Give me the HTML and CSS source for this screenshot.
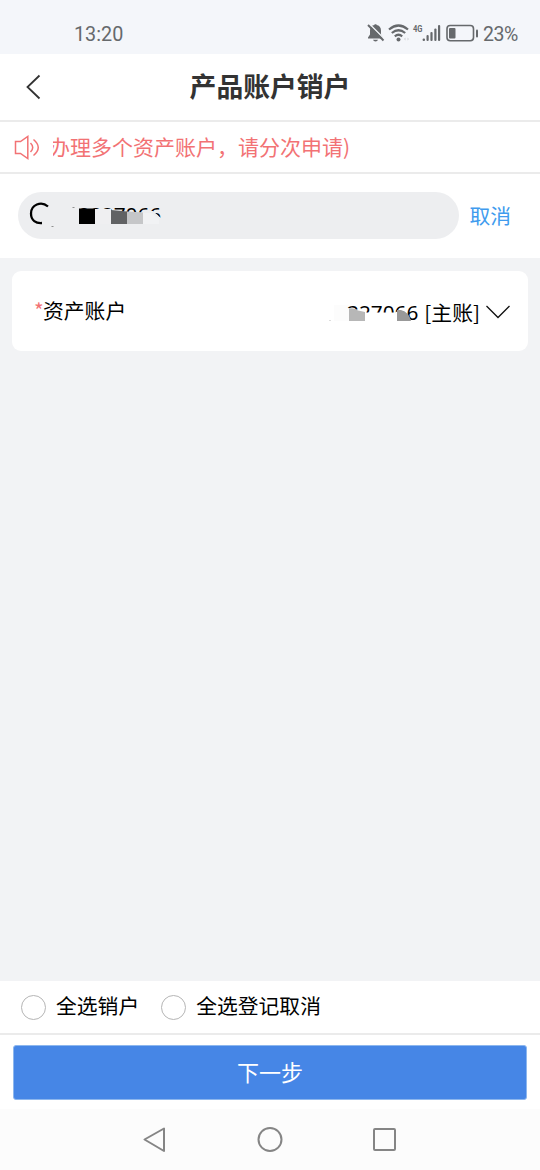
FILE: index.html
```html
<!DOCTYPE html>
<html lang="zh-CN">
<head>
<meta charset="utf-8">
<title>产品账户销户</title>
<link rel="stylesheet" href="styles.css">
</head>
<body>
<div class="screen">
  <div class="status">
    <span class="clock">13:20</span>
    <svg class="status-icons" width="114" height="24" viewBox="0 0 114 24">
      <g fill="#66696c">
        <path d="M3 16.5 L5 13.5 V9.5 Q5 4.500 9.500 4 V3.200 H11.500 V4 Q15.800 4.500 16 9.500 V13.500 L18 16.500 V17.500 H3 Z"/>
        <path d="M8 18.700 H13 Q12.500 20.500 10.500 20.500 Q8.500 20.500 8 18.700 Z"/>
        <rect x="57.600" y="17.500" width="2.400" height="2.500" rx="1"/>
        <rect x="61.500" y="14" width="2.200" height="6" rx="1"/>
        <rect x="65.400" y="11" width="2.200" height="9" rx="1"/>
        <rect x="69.300" y="7.500" width="2.200" height="12.500" rx="1"/>
        <rect x="73" y="4" width="2.200" height="16" rx="1"/>
        <rect x="84" y="7" width="6.500" height="10.500" rx="1"/>
        <rect x="111" y="8.500" width="2" height="8" rx="1"/>
        <circle cx="33.500" cy="18.500" r="2"/>
      </g>
      <path d="M4.500 3 L19.500 18" stroke="#f4f6fa" stroke-width="1.400"/>
      <path d="M3 4 L18.500 19.500" stroke="#66696c" stroke-width="1.900"/>
      <g fill="none" stroke="#66696c" stroke-width="2.200">
        <path d="M24 8.500 Q33.500 .500 43 8.500"/>
        <path d="M26.800 12 Q33.500 6.500 40.200 12"/>
        <path d="M29.800 15.300 Q33.500 12.200 37.200 15.300"/>
        <rect x="82" y="4.500" width="26.500" height="15.200" rx="3.200" stroke-width="1.600"/>
      </g>
      <path d="M39 18 l1.500 -1.500 v3 z M44 18 l-1.500 -1.500 v3 z" fill="#cfd2d5"/>
      <text class="net" x="48" y="10.500" textLength="9.500" lengthAdjust="spacingAndGlyphs">4G</text>
    </svg>
    <span class="percent">23%</span>
  </div>

  <header class="header">
    <svg class="back" width="16" height="26" viewBox="0 0 16 26"><path d="M14.500 1.500 L2.500 13 L14.500 24.500" fill="none" stroke="#333" stroke-width="1.800"/></svg>
    <h1 class="title">产品账户销户</h1>
  </header>

  <div class="notice">
    <svg class="speaker" width="28" height="28" viewBox="0 0 28 28" fill="none" stroke="#f27274" stroke-width="1.500">
      <path d="M2.500 8.500 H7.500 L14.800 3.500 V25.500 L7.500 20.500 H2.500 Z"/>
      <path d="M17.500 10 Q22 14.500 17.500 19 M20.500 6.500 Q30 14.500 20.500 22.500"/>
    </svg>
    <div class="marquee"><span class="marquee-text">办理多个资产账户，请分次申请)</span></div>
  </div>

  <div class="search">
    <div class="search-box">
      <svg width="160" height="47" viewBox="18 192 160 47">
        <defs><clipPath id="queryClip"><path d="M70 200 V209 H111 V211 L127 212.500 H146 L149 211 H153 L162 219 V200 Z"/></clipPath></defs>
        <path d="M48 206.500 C41 200.500 31 205 31 213.500 C31 220.500 36 223.500 42 223" fill="none" stroke="#000" stroke-width="2.300"/>
        <path d="M51.500 226.500 h2 M72.500 207.500 h2" stroke="#777" stroke-width=".8"/>
        <path d="M95 209 H111 V224 H95 Z" fill="#efeff1"/>
        <path d="M143 213 H151 L159 219 V224 H143 Z" fill="#f1f2f4"/>
        <text class="digits" x="78" y="221.500" clip-path="url(#queryClip)">0027066</text>
        <rect x="79" y="208.500" width="16" height="15.500" fill="#000"/>
        <path d="M111 210 L127 211.500 V224 H111 Z" fill="#616264"/>
        <path d="M127 211.500 L143 212.500 V224 H127 Z" fill="#c5c6c8"/>
      </svg>
    </div>
    <span class="cancel">取消</span>
  </div>

  <main class="content">
    <div class="card">
      <div class="label"><span class="star">*</span>资产账户</div>
      <div class="account">
        <svg class="number" width="92" height="32" viewBox="328 298 92 32">
          <defs><clipPath id="acctClip"><path d="M345 298 H420 V325 H411 Q407 313 397 311 L394 312.500 H366 L358 310 L349 308.500 H345 Z"/></clipPath></defs>
          <rect x="333" y="305" width="15" height="16" fill="#fcfcfc"/>
          <text class="digits" x="346" y="320" clip-path="url(#acctClip)">327066</text>
          <path d="M348 308.500 Q353 307.500 357 310.500 L364 312 V321 H348 Z" fill="#b7b7b7"/>
          <path d="M396 310 H400 Q408 312 410 321 H396 Z" fill="#999"/>
          <path d="M328 320.500 h2" stroke="#ddd"/>
        </svg>
        <span class="main-account">[主账]</span>
        <svg class="chevron" width="26" height="16" viewBox="0 0 26 16"><path d="M1.500 1 L13 12.500 L24.500 1" fill="none" stroke="#111" stroke-width="1.300"/></svg>
      </div>
    </div>
  </main>

  <div class="options">
    <label class="option"><span class="radio"></span><span class="option-text">全选销户</span></label>
    <label class="option"><span class="radio"></span><span class="option-text">全选登记取消</span></label>
  </div>
  <div class="action"><button class="next">下一步</button></div>

  <nav class="nav">
    <svg width="540" height="61" viewBox="0 1109 540 61" fill="none" stroke="#858585" stroke-width="2" stroke-linejoin="round">
      <path d="M164 1128.500 V1151 L144.500 1139.500 Z"/>
      <circle cx="270" cy="1139.500" r="11.500"/>
      <rect x="374" y="1129" width="21" height="21" rx="1"/>
    </svg>
  </nav>
</div>
</body>
</html>
```
FILE: styles.css
```css
* { box-sizing: border-box; }
body { margin: 0; }
svg { display: block; flex: none; }
.screen {
  width: 540px;
  height: 1170px;
  display: flex;
  flex-direction: column;
  overflow: hidden;
  background: #fff;
  color: #000;
  font-family: "Noto Sans CJK SC", sans-serif;
  font-size: 20.8px;
  line-height: 30px;
}
.status {
  height: 54px;
  flex: none;
  display: flex;
  align-items: center;
  padding: 14px 0 0 74px;
  background: #f4f6fa;
  color: #66696c;
  font-family: Roboto, sans-serif;
  font-size: 19.8px;
}
.clock { width: 291px; padding-top: 2px; }
.status-icons { margin-top: -3px; }
.net { font: bold 9px Roboto, sans-serif; fill: #66696c; }
.percent { margin-left: 4px; padding-top: 2px; font-size: 19.5px; letter-spacing: -0.5px; }
.header {
  height: 68px;
  flex: none;
  display: flex;
  align-items: center;
  padding-left: 25px;
  border-bottom: 2px solid #ebebeb;
}
.title {
  flex: 1;
  margin: 0 41px 0 0;
  padding-bottom: 2px;
  text-align: center;
  font-size: 26.8px;
  line-height: 40px;
  font-weight: 700;
  color: #333;
}
.notice {
  height: 52px;
  flex: none;
  display: flex;
  align-items: center;
  padding-left: 13px;
  border-bottom: 2px solid #ebebeb;
  color: #f27274;
}
.marquee { margin-left: 12px; flex: 1; overflow: hidden; padding-bottom: 2px; }
.marquee-text { display: block; margin-left: -4px; font-size: 21px; white-space: nowrap; }
.search {
  height: 84px;
  flex: none;
  display: flex;
  align-items: center;
  padding: 0 0 1px 18px;
}
.search-box { width: 441px; height: 47px; border-radius: 24px; background: #edeef0; overflow: hidden; }
.digits { font: 20.8px "Noto Sans", sans-serif; fill: #000; }
.cancel { margin-left: 10.500px; padding-bottom: 2px; color: #409bee; }
.content { flex: 1; padding: 13px 12px 0; background: #f2f3f5; }
.card {
  height: 80px;
  display: flex;
  justify-content: space-between;
  align-items: center;
  padding: 0 17px 0 22px;
  border-radius: 9px;
  background: #fff;
}
.label { display: flex; padding-bottom: 3px; }
.star { width: 9px; color: #f27274; }
.account { display: flex; align-items: center; padding-top: 3px; }
.number { margin-top: 2px; }
.main-account { margin-left: 3px; padding-bottom: 2px; }
.chevron { margin-left: 5px; }
.options {
  height: 54px;
  flex: none;
  display: flex;
  align-items: center;
  gap: 22px;
  padding-left: 21px;
  border-bottom: 2px solid #ebebeb;
}
.option { display: flex; align-items: center; gap: 10px; }
.option-text { padding-bottom: 4px; }
.radio { width: 25px; height: 25px; border: 1.5px solid #b5b5b5; border-radius: 50%; }
.action { height: 74px; flex: none; padding: 10px 13px 0; }
.next {
  display: block;
  width: 514px;
  height: 55px;
  padding: 0 0 4px;
  border: 1px solid #8db7ee;
  border-radius: 3px;
  background: #4686e6;
  color: #fff;
  font: 22px/50px "Noto Sans CJK SC", sans-serif;
}
.nav { height: 61px; flex: none; background: #fcfcfc; }
```
